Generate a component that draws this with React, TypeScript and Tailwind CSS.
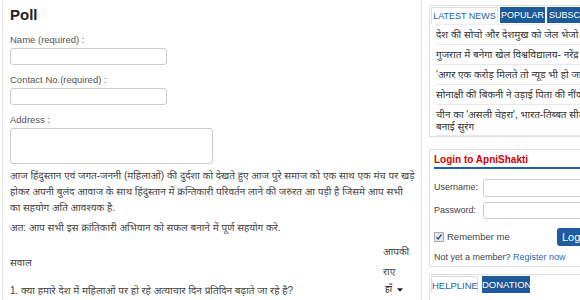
const news = [
  "देश की सोचो और देशमुख को जेल भेजो",
  "गुजरात में बनेगा खेल विश्वविद्यालय- नरेंद्र मोदी",
  "'अगर एक करोड़ मिलते तो न्यूड भी हो जाती'",
  "सोनाक्षी की बिकनी ने उड़ाई पिता की नींद",
]

const font = { fontFamily: '"Liberation Sans", Arial, "Noto Sans Devanagari", "Noto Sans", sans-serif' }

function PollForm() {
  return (
    <div className="ml-[2px] w-[420px] shrink-0 border-x border-[#e6e6e6] pl-[7px] pr-[6px] pt-[5px] text-[9.5px] text-[#555]">
      <h2 className="text-[15px] font-bold leading-5 text-[#222]">Poll</h2>
      <div className="mt-[9px] leading-[12px]">Name (required) :</div>
      <div className="mt-[2px] h-[17px] w-[157px] rounded-[3px] border border-[#ccc]" />
      <div className="mt-[9px] leading-[12px]">Contact No.(required) :</div>
      <div className="mt-[2px] h-[17px] w-[157px] rounded-[3px] border border-[#ccc]" />
      <div className="mt-[9px] leading-[12px]">Address :</div>
      <div className="mt-[2px] h-[36px] w-[203px] rounded-[3px] border border-[#ccc]" />
      <p className="mt-[4px] text-[10px] leading-[16px] text-[#444]">
        आज हिंदुस्तान एवं जगत-जननी (महिलाओं) की दुर्दशा को देखते हुए आज पुरे समाज को एक साथ एक मंच पर खड़े होकर अपनी बुलंद आवाज के साथ हिंदुस्तान में क्रन्तिकारी परिवर्तन लाने की जरुरत आ पड़ी है जिसमे आप सभी का सहयोग अति आवश्यक है.
      </p>
      <p className="mt-[4px] text-[10px] leading-[16px] text-[#444]">अत: आप सभी इस क्रांतिकारी अभियान को सफल बनाने में पूर्ण सहयोग करे.</p>
      <div className="mt-[6px] flex text-[10px] text-[#444]">
        <div className="flex flex-1 items-center">सवाल</div>
        <div className="w-[32px] leading-[20px]">
          <div>आपकी</div>
          <div>राए</div>
        </div>
      </div>
      <div className="flex h-[16px] items-center text-[10px] text-[#444]">
        <div className="flex-1">1. क्या हमारे देश में महिलाओं पर हो रहे अत्याचार दिन प्रतिदिन बढ़ाते जा रहे है?</div>
        <div className="flex w-[32px] items-center gap-[5px] pl-[2px] text-[9px] text-[#111]">
          हाँ
          <svg width="6" height="4" viewBox="0 0 7 4"><path d="M0 0h7L3.5 4z" fill="#222" /></svg>
        </div>
      </div>
    </div>
  )
}

function Tab({ label, active, w }: { label: string; active?: boolean; w: string }) {
  return (
    <div
      className={
        (active
          ? "border border-b-0 border-[#ddd] bg-white text-[#2463a8]"
          : "bg-[#1d5a98] text-white") +
        " h-[16px] shrink-0 whitespace-nowrap text-center text-[9px] leading-[16px] " +
        w
      }
    >
      {label}
    </div>
  )
}

function Sidebar() {
  return (
    <div className="ml-[7px] w-[200px] shrink-0 pt-[5px]">
      <div className="h-[132px] border border-[#e0e0e0] pl-[1px] pt-[1px]">
        <div className="flex gap-[2px]">
          <Tab label="LATEST NEWS" active w="w-[67px]" />
          <Tab label="POPULAR" w="w-[45px]" />
          <Tab label="SUBSCRIBE" w="w-[56px]" />
        </div>
        <div className="ml-[5px] mt-[1px] border-t border-[#eee] text-[10px] text-[#333]">
          {news.map((n) => (
            <div key={n} className="h-[20px] whitespace-nowrap border-b border-[#e8e8e8] leading-[20px]">
              {n}
            </div>
          ))}
          <div className="whitespace-nowrap border-b border-[#e8e8e8] pt-[4px] pb-[2px] leading-[12px]">
            चीन का 'असली चेहरा', भारत-तिब्बत सीमा पर
            <br />
            बनाई सुरंग
          </div>
        </div>
      </div>
      <div className="mt-[12px] h-[118px] border border-[#e0e0e0] px-[4px] pt-[4px] text-[9px] text-[#444]">
        <div className="whitespace-nowrap border-b-2 border-[#1f5fa0] pb-[1px] text-[10px] font-bold leading-[12px] text-[#d40000]">Login to ApniShakti</div>
        <div className="mt-[10px] flex items-center">
          <span className="w-[49px] shrink-0">Username:</span>
          <div className="h-[18px] flex-1 rounded-[3px] border border-[#ccc]" />
        </div>
        <div className="mt-[5px] flex items-center">
          <span className="w-[49px] shrink-0">Password:</span>
          <div className="h-[17px] flex-1 rounded-[3px] border border-[#ccc]" />
        </div>
        <div className="mt-[9px] flex h-[18px] items-center">
          <div className="flex w-[123px] shrink-0 items-center">
            <div className="flex h-[10px] w-[10px] items-center justify-center border border-[#aaa] bg-[#e6e6e6]">
              <svg width="8" height="8" viewBox="0 0 8 8"><path d="M1.5 4.2L3.2 6 6.5 1.5" stroke="#2a4f8a" strokeWidth="1.3" fill="none" /></svg>
            </div>
            <span className="ml-[3px] text-[9.5px]">Remember me</span>
          </div>
          <div className="h-[18px] shrink-0 whitespace-nowrap rounded-[3px] bg-[#1d5c9e] px-[5px] text-[11px] leading-[18px] text-white">Log In</div>
        </div>
        <div className="mt-[5px] whitespace-nowrap leading-[12px]">
          Not yet a member? <span className="text-[#2a6ab0]">Register now</span>
        </div>
      </div>
      <div className="mt-[7px] h-[40px] border border-[#e0e0e0] pl-[1px] pt-[1px]">
        <div className="flex gap-[4px]">
          <div className="h-[17px] w-[47px] border border-b-0 border-[#ddd] bg-white text-center text-[9.5px] leading-[17px] text-[#2463a8]">HELPLINE</div>
          <div className="h-[17px] w-[48px] bg-[#1d5a98] text-center text-[9.5px] leading-[17px] text-white">DONATION</div>
        </div>
      </div>
    </div>
  )
}

export default function App() {
  return (
    <div className="flex h-[300px] w-[580px] overflow-hidden bg-white" style={font}>
      <PollForm />
      <Sidebar />
    </div>
  )
}
